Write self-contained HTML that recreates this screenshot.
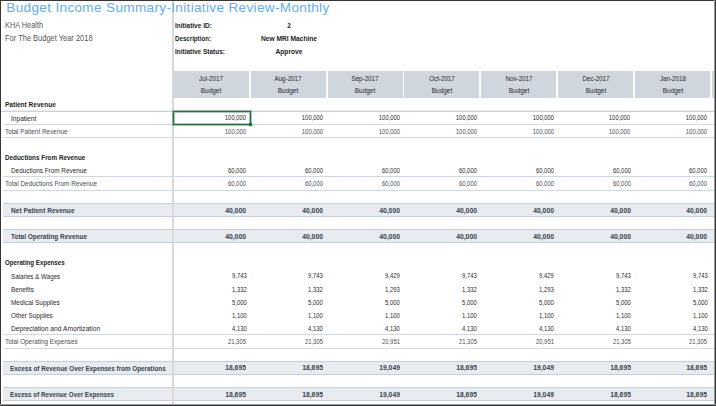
<!DOCTYPE html>
<html><head><meta charset="utf-8"><style>
html,body{margin:0;padding:0;background:#fff;width:716px;height:406px;overflow:hidden;}
body{position:relative;font-family:"Liberation Sans",sans-serif;}
.t{position:absolute;white-space:pre;}
.r{position:absolute;box-sizing:content-box;}
</style></head><body>
<div class="r" style="left:174px;top:71px;width:75px;height:27px;background:#cfd6de;"></div>
<div class="r" style="left:251px;top:71px;width:75px;height:27px;background:#cfd6de;"></div>
<div class="r" style="left:328px;top:71px;width:75px;height:27px;background:#cfd6de;"></div>
<div class="r" style="left:404px;top:71px;width:75px;height:27px;background:#cfd6de;"></div>
<div class="r" style="left:481px;top:71px;width:75px;height:27px;background:#cfd6de;"></div>
<div class="r" style="left:558px;top:71px;width:75px;height:27px;background:#cfd6de;"></div>
<div class="r" style="left:635px;top:71px;width:75px;height:27px;background:#cfd6de;"></div>
<div class="r" style="left:712px;top:71px;width:75px;height:27px;background:#cfd6de;"></div>
<div class="t" style="left:11.20px;width:400px;text-align:center;top:75.07px;font-size:7.0px;line-height:7.0px;color:#2a2a2a;font-weight:400;letter-spacing:0px;transform:scaleX(0.89);transform-origin:center top;">Jul-2017</div>
<div class="t" style="left:11.20px;width:400px;text-align:center;top:87.17px;font-size:7.0px;line-height:7.0px;color:#2a2a2a;font-weight:400;letter-spacing:0px;transform:scaleX(0.92);transform-origin:center top;">Budget</div>
<div class="t" style="left:88.10px;width:400px;text-align:center;top:75.07px;font-size:7.0px;line-height:7.0px;color:#2a2a2a;font-weight:400;letter-spacing:0px;transform:scaleX(0.89);transform-origin:center top;">Aug-2017</div>
<div class="t" style="left:88.10px;width:400px;text-align:center;top:87.17px;font-size:7.0px;line-height:7.0px;color:#2a2a2a;font-weight:400;letter-spacing:0px;transform:scaleX(0.92);transform-origin:center top;">Budget</div>
<div class="t" style="left:165.00px;width:400px;text-align:center;top:75.07px;font-size:7.0px;line-height:7.0px;color:#2a2a2a;font-weight:400;letter-spacing:0px;transform:scaleX(0.89);transform-origin:center top;">Sep-2017</div>
<div class="t" style="left:165.00px;width:400px;text-align:center;top:87.17px;font-size:7.0px;line-height:7.0px;color:#2a2a2a;font-weight:400;letter-spacing:0px;transform:scaleX(0.92);transform-origin:center top;">Budget</div>
<div class="t" style="left:241.90px;width:400px;text-align:center;top:75.07px;font-size:7.0px;line-height:7.0px;color:#2a2a2a;font-weight:400;letter-spacing:0px;transform:scaleX(0.89);transform-origin:center top;">Oct-2017</div>
<div class="t" style="left:241.90px;width:400px;text-align:center;top:87.17px;font-size:7.0px;line-height:7.0px;color:#2a2a2a;font-weight:400;letter-spacing:0px;transform:scaleX(0.92);transform-origin:center top;">Budget</div>
<div class="t" style="left:318.80px;width:400px;text-align:center;top:75.07px;font-size:7.0px;line-height:7.0px;color:#2a2a2a;font-weight:400;letter-spacing:0px;transform:scaleX(0.89);transform-origin:center top;">Nov-2017</div>
<div class="t" style="left:318.80px;width:400px;text-align:center;top:87.17px;font-size:7.0px;line-height:7.0px;color:#2a2a2a;font-weight:400;letter-spacing:0px;transform:scaleX(0.92);transform-origin:center top;">Budget</div>
<div class="t" style="left:395.70px;width:400px;text-align:center;top:75.07px;font-size:7.0px;line-height:7.0px;color:#2a2a2a;font-weight:400;letter-spacing:0px;transform:scaleX(0.89);transform-origin:center top;">Dec-2017</div>
<div class="t" style="left:395.70px;width:400px;text-align:center;top:87.17px;font-size:7.0px;line-height:7.0px;color:#2a2a2a;font-weight:400;letter-spacing:0px;transform:scaleX(0.92);transform-origin:center top;">Budget</div>
<div class="t" style="left:472.60px;width:400px;text-align:center;top:75.07px;font-size:7.0px;line-height:7.0px;color:#2a2a2a;font-weight:400;letter-spacing:0px;transform:scaleX(0.89);transform-origin:center top;">Jan-2018</div>
<div class="t" style="left:472.60px;width:400px;text-align:center;top:87.17px;font-size:7.0px;line-height:7.0px;color:#2a2a2a;font-weight:400;letter-spacing:0px;transform:scaleX(0.92);transform-origin:center top;">Budget</div>
<div class="t" style="left:549.50px;width:400px;text-align:center;top:75.07px;font-size:7.0px;line-height:7.0px;color:#2a2a2a;font-weight:400;letter-spacing:0px;transform:scaleX(0.89);transform-origin:center top;">Feb-2018</div>
<div class="t" style="left:549.50px;width:400px;text-align:center;top:87.17px;font-size:7.0px;line-height:7.0px;color:#2a2a2a;font-weight:400;letter-spacing:0px;transform:scaleX(0.92);transform-origin:center top;">Budget</div>
<div class="r" style="left:1px;top:110px;width:714px;height:1px;background:#ececec;"></div>
<div class="r" style="left:1px;top:111px;width:714px;height:1px;background:#d2d2d2;"></div>
<div class="r" style="left:3px;top:124px;width:712px;height:1px;background:#cdd8e2;"></div>
<div class="r" style="left:3px;top:124px;width:712px;height:1px;background:#cdd8e2;"></div>
<div class="r" style="left:3px;top:137px;width:712px;height:1px;background:#cdd8e2;"></div>
<div class="r" style="left:3px;top:176px;width:712px;height:1px;background:#cdd8e2;"></div>
<div class="r" style="left:3px;top:190px;width:712px;height:1px;background:#cdd8e2;"></div>
<div class="r" style="left:3px;top:203px;width:712px;height:13px;background:#e8ebef;"></div>
<div class="r" style="left:3px;top:203px;width:712px;height:1px;background:#c3cfdb;"></div>
<div class="r" style="left:3px;top:216px;width:712px;height:1px;background:#c3cfdb;"></div>
<div class="r" style="left:3px;top:229px;width:712px;height:13px;background:#e8ebef;"></div>
<div class="r" style="left:3px;top:229px;width:712px;height:1px;background:#c3cfdb;"></div>
<div class="r" style="left:3px;top:242px;width:712px;height:1px;background:#c3cfdb;"></div>
<div class="r" style="left:3px;top:334px;width:712px;height:1px;background:#cdd8e2;"></div>
<div class="r" style="left:3px;top:348px;width:712px;height:1px;background:#cdd8e2;"></div>
<div class="r" style="left:3px;top:361px;width:712px;height:13px;background:#e8ebef;"></div>
<div class="r" style="left:3px;top:361px;width:712px;height:1px;background:#c3cfdb;"></div>
<div class="r" style="left:3px;top:374px;width:712px;height:1px;background:#c3cfdb;"></div>
<div class="r" style="left:3px;top:387px;width:712px;height:13px;background:#e8ebef;"></div>
<div class="r" style="left:3px;top:387px;width:712px;height:1px;background:#c3cfdb;"></div>
<div class="r" style="left:3px;top:400px;width:712px;height:1px;background:#c3cfdb;"></div>
<div class="r" style="left:172px;top:1px;width:1px;height:404px;background:#d8d8d8;"></div>
<div class="r" style="left:173px;top:1px;width:1px;height:404px;background:#d8d8d8;"></div>
<div class="t" style="left:4.50px;top:101.46px;font-size:7.3px;line-height:7.3px;color:#1e1e1e;font-weight:700;letter-spacing:0px;transform:scaleX(0.8947368421052633);transform-origin:left top;">Patient Revenue</div>
<div class="t" style="left:10.50px;top:114.62px;font-size:7.3px;line-height:7.3px;color:#2a2a2a;font-weight:400;letter-spacing:0px;transform:scaleX(0.9007562995357341);transform-origin:left top;">Inpatient</div>
<div class="t" style="right:469.70px;top:114.45px;font-size:7.5px;line-height:7.5px;color:#2a2a2a;font-weight:400;letter-spacing:0px;transform:scaleX(0.785);transform-origin:right top;">100,000</div>
<div class="t" style="right:392.87px;top:114.45px;font-size:7.5px;line-height:7.5px;color:#2a2a2a;font-weight:400;letter-spacing:0px;transform:scaleX(0.785);transform-origin:right top;">100,000</div>
<div class="t" style="right:316.04px;top:114.45px;font-size:7.5px;line-height:7.5px;color:#2a2a2a;font-weight:400;letter-spacing:0px;transform:scaleX(0.785);transform-origin:right top;">100,000</div>
<div class="t" style="right:239.21px;top:114.45px;font-size:7.5px;line-height:7.5px;color:#2a2a2a;font-weight:400;letter-spacing:0px;transform:scaleX(0.785);transform-origin:right top;">100,000</div>
<div class="t" style="right:162.38px;top:114.45px;font-size:7.5px;line-height:7.5px;color:#2a2a2a;font-weight:400;letter-spacing:0px;transform:scaleX(0.785);transform-origin:right top;">100,000</div>
<div class="t" style="right:85.55px;top:114.45px;font-size:7.5px;line-height:7.5px;color:#2a2a2a;font-weight:400;letter-spacing:0px;transform:scaleX(0.785);transform-origin:right top;">100,000</div>
<div class="t" style="right:8.72px;top:114.45px;font-size:7.5px;line-height:7.5px;color:#2a2a2a;font-weight:400;letter-spacing:0px;transform:scaleX(0.785);transform-origin:right top;">100,000</div>
<div class="t" style="right:-68.11px;top:114.45px;font-size:7.5px;line-height:7.5px;color:#2a2a2a;font-weight:400;letter-spacing:0px;transform:scaleX(0.785);transform-origin:right top;">100,000</div>
<div class="t" style="left:4.90px;top:127.78px;font-size:7.3px;line-height:7.3px;color:#46515c;font-weight:400;letter-spacing:0px;transform:scaleX(0.8761793410098618);transform-origin:left top;">Total Patient Revenue</div>
<div class="t" style="right:469.70px;top:127.61px;font-size:7.5px;line-height:7.5px;color:#46515c;font-weight:400;letter-spacing:0px;transform:scaleX(0.785);transform-origin:right top;">100,000</div>
<div class="t" style="right:392.87px;top:127.61px;font-size:7.5px;line-height:7.5px;color:#46515c;font-weight:400;letter-spacing:0px;transform:scaleX(0.785);transform-origin:right top;">100,000</div>
<div class="t" style="right:316.04px;top:127.61px;font-size:7.5px;line-height:7.5px;color:#46515c;font-weight:400;letter-spacing:0px;transform:scaleX(0.785);transform-origin:right top;">100,000</div>
<div class="t" style="right:239.21px;top:127.61px;font-size:7.5px;line-height:7.5px;color:#46515c;font-weight:400;letter-spacing:0px;transform:scaleX(0.785);transform-origin:right top;">100,000</div>
<div class="t" style="right:162.38px;top:127.61px;font-size:7.5px;line-height:7.5px;color:#46515c;font-weight:400;letter-spacing:0px;transform:scaleX(0.785);transform-origin:right top;">100,000</div>
<div class="t" style="right:85.55px;top:127.61px;font-size:7.5px;line-height:7.5px;color:#46515c;font-weight:400;letter-spacing:0px;transform:scaleX(0.785);transform-origin:right top;">100,000</div>
<div class="t" style="right:8.72px;top:127.61px;font-size:7.5px;line-height:7.5px;color:#46515c;font-weight:400;letter-spacing:0px;transform:scaleX(0.785);transform-origin:right top;">100,000</div>
<div class="t" style="right:-68.11px;top:127.61px;font-size:7.5px;line-height:7.5px;color:#46515c;font-weight:400;letter-spacing:0px;transform:scaleX(0.785);transform-origin:right top;">100,000</div>
<div class="t" style="left:4.60px;top:154.10px;font-size:7.3px;line-height:7.3px;color:#1e1e1e;font-weight:700;letter-spacing:0px;transform:scaleX(0.8688707027346403);transform-origin:left top;">Deductions From Revenue</div>
<div class="t" style="left:10.50px;top:167.26px;font-size:7.3px;line-height:7.3px;color:#2a2a2a;font-weight:400;letter-spacing:0px;transform:scaleX(0.8745993487197763);transform-origin:left top;">Deductions From Revenue</div>
<div class="t" style="right:469.70px;top:167.09px;font-size:7.5px;line-height:7.5px;color:#2a2a2a;font-weight:400;letter-spacing:0px;transform:scaleX(0.785);transform-origin:right top;">60,000</div>
<div class="t" style="right:392.87px;top:167.09px;font-size:7.5px;line-height:7.5px;color:#2a2a2a;font-weight:400;letter-spacing:0px;transform:scaleX(0.785);transform-origin:right top;">60,000</div>
<div class="t" style="right:316.04px;top:167.09px;font-size:7.5px;line-height:7.5px;color:#2a2a2a;font-weight:400;letter-spacing:0px;transform:scaleX(0.785);transform-origin:right top;">60,000</div>
<div class="t" style="right:239.21px;top:167.09px;font-size:7.5px;line-height:7.5px;color:#2a2a2a;font-weight:400;letter-spacing:0px;transform:scaleX(0.785);transform-origin:right top;">60,000</div>
<div class="t" style="right:162.38px;top:167.09px;font-size:7.5px;line-height:7.5px;color:#2a2a2a;font-weight:400;letter-spacing:0px;transform:scaleX(0.785);transform-origin:right top;">60,000</div>
<div class="t" style="right:85.55px;top:167.09px;font-size:7.5px;line-height:7.5px;color:#2a2a2a;font-weight:400;letter-spacing:0px;transform:scaleX(0.785);transform-origin:right top;">60,000</div>
<div class="t" style="right:8.72px;top:167.09px;font-size:7.5px;line-height:7.5px;color:#2a2a2a;font-weight:400;letter-spacing:0px;transform:scaleX(0.785);transform-origin:right top;">60,000</div>
<div class="t" style="right:-68.11px;top:167.09px;font-size:7.5px;line-height:7.5px;color:#2a2a2a;font-weight:400;letter-spacing:0px;transform:scaleX(0.785);transform-origin:right top;">60,000</div>
<div class="t" style="left:5.00px;top:180.42px;font-size:7.3px;line-height:7.3px;color:#46515c;font-weight:400;letter-spacing:0px;transform:scaleX(0.8827343896558155);transform-origin:left top;">Total Deductions From Revenue</div>
<div class="t" style="right:469.70px;top:180.25px;font-size:7.5px;line-height:7.5px;color:#46515c;font-weight:400;letter-spacing:0px;transform:scaleX(0.785);transform-origin:right top;">60,000</div>
<div class="t" style="right:392.87px;top:180.25px;font-size:7.5px;line-height:7.5px;color:#46515c;font-weight:400;letter-spacing:0px;transform:scaleX(0.785);transform-origin:right top;">60,000</div>
<div class="t" style="right:316.04px;top:180.25px;font-size:7.5px;line-height:7.5px;color:#46515c;font-weight:400;letter-spacing:0px;transform:scaleX(0.785);transform-origin:right top;">60,000</div>
<div class="t" style="right:239.21px;top:180.25px;font-size:7.5px;line-height:7.5px;color:#46515c;font-weight:400;letter-spacing:0px;transform:scaleX(0.785);transform-origin:right top;">60,000</div>
<div class="t" style="right:162.38px;top:180.25px;font-size:7.5px;line-height:7.5px;color:#46515c;font-weight:400;letter-spacing:0px;transform:scaleX(0.785);transform-origin:right top;">60,000</div>
<div class="t" style="right:85.55px;top:180.25px;font-size:7.5px;line-height:7.5px;color:#46515c;font-weight:400;letter-spacing:0px;transform:scaleX(0.785);transform-origin:right top;">60,000</div>
<div class="t" style="right:8.72px;top:180.25px;font-size:7.5px;line-height:7.5px;color:#46515c;font-weight:400;letter-spacing:0px;transform:scaleX(0.785);transform-origin:right top;">60,000</div>
<div class="t" style="right:-68.11px;top:180.25px;font-size:7.5px;line-height:7.5px;color:#46515c;font-weight:400;letter-spacing:0px;transform:scaleX(0.785);transform-origin:right top;">60,000</div>
<div class="t" style="left:10.50px;top:206.74px;font-size:7.3px;line-height:7.3px;color:#37434f;font-weight:700;letter-spacing:0px;transform:scaleX(0.9004396141099438);transform-origin:left top;">Net Patient Revenue</div>
<div class="t" style="right:469.70px;top:206.57px;font-size:7.5px;line-height:7.5px;color:#37434f;font-weight:700;letter-spacing:0px;transform:scaleX(0.905);transform-origin:right top;">40,000</div>
<div class="t" style="right:392.87px;top:206.57px;font-size:7.5px;line-height:7.5px;color:#37434f;font-weight:700;letter-spacing:0px;transform:scaleX(0.905);transform-origin:right top;">40,000</div>
<div class="t" style="right:316.04px;top:206.57px;font-size:7.5px;line-height:7.5px;color:#37434f;font-weight:700;letter-spacing:0px;transform:scaleX(0.905);transform-origin:right top;">40,000</div>
<div class="t" style="right:239.21px;top:206.57px;font-size:7.5px;line-height:7.5px;color:#37434f;font-weight:700;letter-spacing:0px;transform:scaleX(0.905);transform-origin:right top;">40,000</div>
<div class="t" style="right:162.38px;top:206.57px;font-size:7.5px;line-height:7.5px;color:#37434f;font-weight:700;letter-spacing:0px;transform:scaleX(0.905);transform-origin:right top;">40,000</div>
<div class="t" style="right:85.55px;top:206.57px;font-size:7.5px;line-height:7.5px;color:#37434f;font-weight:700;letter-spacing:0px;transform:scaleX(0.905);transform-origin:right top;">40,000</div>
<div class="t" style="right:8.72px;top:206.57px;font-size:7.5px;line-height:7.5px;color:#37434f;font-weight:700;letter-spacing:0px;transform:scaleX(0.905);transform-origin:right top;">40,000</div>
<div class="t" style="right:-68.11px;top:206.57px;font-size:7.5px;line-height:7.5px;color:#37434f;font-weight:700;letter-spacing:0px;transform:scaleX(0.905);transform-origin:right top;">40,000</div>
<div class="t" style="left:10.80px;top:233.06px;font-size:7.3px;line-height:7.3px;color:#37434f;font-weight:700;letter-spacing:0px;transform:scaleX(0.886107234887143);transform-origin:left top;">Total Operating Revenue</div>
<div class="t" style="right:469.70px;top:232.89px;font-size:7.5px;line-height:7.5px;color:#37434f;font-weight:700;letter-spacing:0px;transform:scaleX(0.905);transform-origin:right top;">40,000</div>
<div class="t" style="right:392.87px;top:232.89px;font-size:7.5px;line-height:7.5px;color:#37434f;font-weight:700;letter-spacing:0px;transform:scaleX(0.905);transform-origin:right top;">40,000</div>
<div class="t" style="right:316.04px;top:232.89px;font-size:7.5px;line-height:7.5px;color:#37434f;font-weight:700;letter-spacing:0px;transform:scaleX(0.905);transform-origin:right top;">40,000</div>
<div class="t" style="right:239.21px;top:232.89px;font-size:7.5px;line-height:7.5px;color:#37434f;font-weight:700;letter-spacing:0px;transform:scaleX(0.905);transform-origin:right top;">40,000</div>
<div class="t" style="right:162.38px;top:232.89px;font-size:7.5px;line-height:7.5px;color:#37434f;font-weight:700;letter-spacing:0px;transform:scaleX(0.905);transform-origin:right top;">40,000</div>
<div class="t" style="right:85.55px;top:232.89px;font-size:7.5px;line-height:7.5px;color:#37434f;font-weight:700;letter-spacing:0px;transform:scaleX(0.905);transform-origin:right top;">40,000</div>
<div class="t" style="right:8.72px;top:232.89px;font-size:7.5px;line-height:7.5px;color:#37434f;font-weight:700;letter-spacing:0px;transform:scaleX(0.905);transform-origin:right top;">40,000</div>
<div class="t" style="right:-68.11px;top:232.89px;font-size:7.5px;line-height:7.5px;color:#37434f;font-weight:700;letter-spacing:0px;transform:scaleX(0.905);transform-origin:right top;">40,000</div>
<div class="t" style="left:4.60px;top:259.38px;font-size:7.3px;line-height:7.3px;color:#1e1e1e;font-weight:700;letter-spacing:0px;transform:scaleX(0.8450704225352113);transform-origin:left top;">Operating Expenses</div>
<div class="t" style="left:10.50px;top:272.54px;font-size:7.3px;line-height:7.3px;color:#2a2a2a;font-weight:400;letter-spacing:0px;transform:scaleX(0.8528247048380757);transform-origin:left top;">Salaries &amp; Wages</div>
<div class="t" style="right:469.70px;top:272.37px;font-size:7.5px;line-height:7.5px;color:#2a2a2a;font-weight:400;letter-spacing:0px;transform:scaleX(0.785);transform-origin:right top;">9,743</div>
<div class="t" style="right:392.87px;top:272.37px;font-size:7.5px;line-height:7.5px;color:#2a2a2a;font-weight:400;letter-spacing:0px;transform:scaleX(0.785);transform-origin:right top;">9,743</div>
<div class="t" style="right:316.04px;top:272.37px;font-size:7.5px;line-height:7.5px;color:#2a2a2a;font-weight:400;letter-spacing:0px;transform:scaleX(0.785);transform-origin:right top;">9,429</div>
<div class="t" style="right:239.21px;top:272.37px;font-size:7.5px;line-height:7.5px;color:#2a2a2a;font-weight:400;letter-spacing:0px;transform:scaleX(0.785);transform-origin:right top;">9,743</div>
<div class="t" style="right:162.38px;top:272.37px;font-size:7.5px;line-height:7.5px;color:#2a2a2a;font-weight:400;letter-spacing:0px;transform:scaleX(0.785);transform-origin:right top;">9,429</div>
<div class="t" style="right:85.55px;top:272.37px;font-size:7.5px;line-height:7.5px;color:#2a2a2a;font-weight:400;letter-spacing:0px;transform:scaleX(0.785);transform-origin:right top;">9,743</div>
<div class="t" style="right:8.72px;top:272.37px;font-size:7.5px;line-height:7.5px;color:#2a2a2a;font-weight:400;letter-spacing:0px;transform:scaleX(0.785);transform-origin:right top;">9,743</div>
<div class="t" style="right:-68.11px;top:272.37px;font-size:7.5px;line-height:7.5px;color:#2a2a2a;font-weight:400;letter-spacing:0px;transform:scaleX(0.785);transform-origin:right top;">9,743</div>
<div class="t" style="left:10.50px;top:285.70px;font-size:7.3px;line-height:7.3px;color:#2a2a2a;font-weight:400;letter-spacing:0px;transform:scaleX(0.87025878733671);transform-origin:left top;">Benefits</div>
<div class="t" style="right:469.70px;top:285.53px;font-size:7.5px;line-height:7.5px;color:#2a2a2a;font-weight:400;letter-spacing:0px;transform:scaleX(0.785);transform-origin:right top;">1,332</div>
<div class="t" style="right:392.87px;top:285.53px;font-size:7.5px;line-height:7.5px;color:#2a2a2a;font-weight:400;letter-spacing:0px;transform:scaleX(0.785);transform-origin:right top;">1,332</div>
<div class="t" style="right:316.04px;top:285.53px;font-size:7.5px;line-height:7.5px;color:#2a2a2a;font-weight:400;letter-spacing:0px;transform:scaleX(0.785);transform-origin:right top;">1,293</div>
<div class="t" style="right:239.21px;top:285.53px;font-size:7.5px;line-height:7.5px;color:#2a2a2a;font-weight:400;letter-spacing:0px;transform:scaleX(0.785);transform-origin:right top;">1,332</div>
<div class="t" style="right:162.38px;top:285.53px;font-size:7.5px;line-height:7.5px;color:#2a2a2a;font-weight:400;letter-spacing:0px;transform:scaleX(0.785);transform-origin:right top;">1,293</div>
<div class="t" style="right:85.55px;top:285.53px;font-size:7.5px;line-height:7.5px;color:#2a2a2a;font-weight:400;letter-spacing:0px;transform:scaleX(0.785);transform-origin:right top;">1,332</div>
<div class="t" style="right:8.72px;top:285.53px;font-size:7.5px;line-height:7.5px;color:#2a2a2a;font-weight:400;letter-spacing:0px;transform:scaleX(0.785);transform-origin:right top;">1,332</div>
<div class="t" style="right:-68.11px;top:285.53px;font-size:7.5px;line-height:7.5px;color:#2a2a2a;font-weight:400;letter-spacing:0px;transform:scaleX(0.785);transform-origin:right top;">1,332</div>
<div class="t" style="left:10.50px;top:298.86px;font-size:7.3px;line-height:7.3px;color:#2a2a2a;font-weight:400;letter-spacing:0px;transform:scaleX(0.8838614884089345);transform-origin:left top;">Medical Supplies</div>
<div class="t" style="right:469.70px;top:298.69px;font-size:7.5px;line-height:7.5px;color:#2a2a2a;font-weight:400;letter-spacing:0px;transform:scaleX(0.785);transform-origin:right top;">5,000</div>
<div class="t" style="right:392.87px;top:298.69px;font-size:7.5px;line-height:7.5px;color:#2a2a2a;font-weight:400;letter-spacing:0px;transform:scaleX(0.785);transform-origin:right top;">5,000</div>
<div class="t" style="right:316.04px;top:298.69px;font-size:7.5px;line-height:7.5px;color:#2a2a2a;font-weight:400;letter-spacing:0px;transform:scaleX(0.785);transform-origin:right top;">5,000</div>
<div class="t" style="right:239.21px;top:298.69px;font-size:7.5px;line-height:7.5px;color:#2a2a2a;font-weight:400;letter-spacing:0px;transform:scaleX(0.785);transform-origin:right top;">5,000</div>
<div class="t" style="right:162.38px;top:298.69px;font-size:7.5px;line-height:7.5px;color:#2a2a2a;font-weight:400;letter-spacing:0px;transform:scaleX(0.785);transform-origin:right top;">5,000</div>
<div class="t" style="right:85.55px;top:298.69px;font-size:7.5px;line-height:7.5px;color:#2a2a2a;font-weight:400;letter-spacing:0px;transform:scaleX(0.785);transform-origin:right top;">5,000</div>
<div class="t" style="right:8.72px;top:298.69px;font-size:7.5px;line-height:7.5px;color:#2a2a2a;font-weight:400;letter-spacing:0px;transform:scaleX(0.785);transform-origin:right top;">5,000</div>
<div class="t" style="right:-68.11px;top:298.69px;font-size:7.5px;line-height:7.5px;color:#2a2a2a;font-weight:400;letter-spacing:0px;transform:scaleX(0.785);transform-origin:right top;">5,000</div>
<div class="t" style="left:10.50px;top:312.02px;font-size:7.3px;line-height:7.3px;color:#2a2a2a;font-weight:400;letter-spacing:0px;transform:scaleX(0.8614161476768811);transform-origin:left top;">Other Supplies</div>
<div class="t" style="right:469.70px;top:311.85px;font-size:7.5px;line-height:7.5px;color:#2a2a2a;font-weight:400;letter-spacing:0px;transform:scaleX(0.785);transform-origin:right top;">1,100</div>
<div class="t" style="right:392.87px;top:311.85px;font-size:7.5px;line-height:7.5px;color:#2a2a2a;font-weight:400;letter-spacing:0px;transform:scaleX(0.785);transform-origin:right top;">1,100</div>
<div class="t" style="right:316.04px;top:311.85px;font-size:7.5px;line-height:7.5px;color:#2a2a2a;font-weight:400;letter-spacing:0px;transform:scaleX(0.785);transform-origin:right top;">1,100</div>
<div class="t" style="right:239.21px;top:311.85px;font-size:7.5px;line-height:7.5px;color:#2a2a2a;font-weight:400;letter-spacing:0px;transform:scaleX(0.785);transform-origin:right top;">1,100</div>
<div class="t" style="right:162.38px;top:311.85px;font-size:7.5px;line-height:7.5px;color:#2a2a2a;font-weight:400;letter-spacing:0px;transform:scaleX(0.785);transform-origin:right top;">1,100</div>
<div class="t" style="right:85.55px;top:311.85px;font-size:7.5px;line-height:7.5px;color:#2a2a2a;font-weight:400;letter-spacing:0px;transform:scaleX(0.785);transform-origin:right top;">1,100</div>
<div class="t" style="right:8.72px;top:311.85px;font-size:7.5px;line-height:7.5px;color:#2a2a2a;font-weight:400;letter-spacing:0px;transform:scaleX(0.785);transform-origin:right top;">1,100</div>
<div class="t" style="right:-68.11px;top:311.85px;font-size:7.5px;line-height:7.5px;color:#2a2a2a;font-weight:400;letter-spacing:0px;transform:scaleX(0.785);transform-origin:right top;">1,100</div>
<div class="t" style="left:10.50px;top:325.18px;font-size:7.3px;line-height:7.3px;color:#2a2a2a;font-weight:400;letter-spacing:0px;transform:scaleX(0.9155105676282084);transform-origin:left top;">Depreciation and Amortization</div>
<div class="t" style="right:469.70px;top:325.01px;font-size:7.5px;line-height:7.5px;color:#2a2a2a;font-weight:400;letter-spacing:0px;transform:scaleX(0.785);transform-origin:right top;">4,130</div>
<div class="t" style="right:392.87px;top:325.01px;font-size:7.5px;line-height:7.5px;color:#2a2a2a;font-weight:400;letter-spacing:0px;transform:scaleX(0.785);transform-origin:right top;">4,130</div>
<div class="t" style="right:316.04px;top:325.01px;font-size:7.5px;line-height:7.5px;color:#2a2a2a;font-weight:400;letter-spacing:0px;transform:scaleX(0.785);transform-origin:right top;">4,130</div>
<div class="t" style="right:239.21px;top:325.01px;font-size:7.5px;line-height:7.5px;color:#2a2a2a;font-weight:400;letter-spacing:0px;transform:scaleX(0.785);transform-origin:right top;">4,130</div>
<div class="t" style="right:162.38px;top:325.01px;font-size:7.5px;line-height:7.5px;color:#2a2a2a;font-weight:400;letter-spacing:0px;transform:scaleX(0.785);transform-origin:right top;">4,130</div>
<div class="t" style="right:85.55px;top:325.01px;font-size:7.5px;line-height:7.5px;color:#2a2a2a;font-weight:400;letter-spacing:0px;transform:scaleX(0.785);transform-origin:right top;">4,130</div>
<div class="t" style="right:8.72px;top:325.01px;font-size:7.5px;line-height:7.5px;color:#2a2a2a;font-weight:400;letter-spacing:0px;transform:scaleX(0.785);transform-origin:right top;">4,130</div>
<div class="t" style="right:-68.11px;top:325.01px;font-size:7.5px;line-height:7.5px;color:#2a2a2a;font-weight:400;letter-spacing:0px;transform:scaleX(0.785);transform-origin:right top;">4,130</div>
<div class="t" style="left:5.00px;top:338.34px;font-size:7.3px;line-height:7.3px;color:#46515c;font-weight:400;letter-spacing:0px;transform:scaleX(0.8691716328826194);transform-origin:left top;">Total Operating Expenses</div>
<div class="t" style="right:469.70px;top:338.17px;font-size:7.5px;line-height:7.5px;color:#46515c;font-weight:400;letter-spacing:0px;transform:scaleX(0.785);transform-origin:right top;">21,305</div>
<div class="t" style="right:392.87px;top:338.17px;font-size:7.5px;line-height:7.5px;color:#46515c;font-weight:400;letter-spacing:0px;transform:scaleX(0.785);transform-origin:right top;">21,305</div>
<div class="t" style="right:316.04px;top:338.17px;font-size:7.5px;line-height:7.5px;color:#46515c;font-weight:400;letter-spacing:0px;transform:scaleX(0.785);transform-origin:right top;">20,951</div>
<div class="t" style="right:239.21px;top:338.17px;font-size:7.5px;line-height:7.5px;color:#46515c;font-weight:400;letter-spacing:0px;transform:scaleX(0.785);transform-origin:right top;">21,305</div>
<div class="t" style="right:162.38px;top:338.17px;font-size:7.5px;line-height:7.5px;color:#46515c;font-weight:400;letter-spacing:0px;transform:scaleX(0.785);transform-origin:right top;">20,951</div>
<div class="t" style="right:85.55px;top:338.17px;font-size:7.5px;line-height:7.5px;color:#46515c;font-weight:400;letter-spacing:0px;transform:scaleX(0.785);transform-origin:right top;">21,305</div>
<div class="t" style="right:8.72px;top:338.17px;font-size:7.5px;line-height:7.5px;color:#46515c;font-weight:400;letter-spacing:0px;transform:scaleX(0.785);transform-origin:right top;">21,305</div>
<div class="t" style="right:-68.11px;top:338.17px;font-size:7.5px;line-height:7.5px;color:#46515c;font-weight:400;letter-spacing:0px;transform:scaleX(0.785);transform-origin:right top;">21,305</div>
<div class="t" style="left:10.40px;top:364.66px;font-size:7.3px;line-height:7.3px;color:#37434f;font-weight:700;letter-spacing:0px;transform:scaleX(0.8644390653432587);transform-origin:left top;">Excess of Revenue Over Expenses from Operations</div>
<div class="t" style="right:469.70px;top:364.49px;font-size:7.5px;line-height:7.5px;color:#37434f;font-weight:700;letter-spacing:0px;transform:scaleX(0.905);transform-origin:right top;">18,695</div>
<div class="t" style="right:392.87px;top:364.49px;font-size:7.5px;line-height:7.5px;color:#37434f;font-weight:700;letter-spacing:0px;transform:scaleX(0.905);transform-origin:right top;">18,695</div>
<div class="t" style="right:316.04px;top:364.49px;font-size:7.5px;line-height:7.5px;color:#37434f;font-weight:700;letter-spacing:0px;transform:scaleX(0.905);transform-origin:right top;">19,049</div>
<div class="t" style="right:239.21px;top:364.49px;font-size:7.5px;line-height:7.5px;color:#37434f;font-weight:700;letter-spacing:0px;transform:scaleX(0.905);transform-origin:right top;">18,695</div>
<div class="t" style="right:162.38px;top:364.49px;font-size:7.5px;line-height:7.5px;color:#37434f;font-weight:700;letter-spacing:0px;transform:scaleX(0.905);transform-origin:right top;">19,049</div>
<div class="t" style="right:85.55px;top:364.49px;font-size:7.5px;line-height:7.5px;color:#37434f;font-weight:700;letter-spacing:0px;transform:scaleX(0.905);transform-origin:right top;">18,695</div>
<div class="t" style="right:8.72px;top:364.49px;font-size:7.5px;line-height:7.5px;color:#37434f;font-weight:700;letter-spacing:0px;transform:scaleX(0.905);transform-origin:right top;">18,695</div>
<div class="t" style="right:-68.11px;top:364.49px;font-size:7.5px;line-height:7.5px;color:#37434f;font-weight:700;letter-spacing:0px;transform:scaleX(0.905);transform-origin:right top;">18,695</div>
<div class="t" style="left:10.40px;top:390.98px;font-size:7.3px;line-height:7.3px;color:#37434f;font-weight:700;letter-spacing:0px;transform:scaleX(0.8578832114062175);transform-origin:left top;">Excess of Revenue Over Expenses</div>
<div class="t" style="right:469.70px;top:390.81px;font-size:7.5px;line-height:7.5px;color:#37434f;font-weight:700;letter-spacing:0px;transform:scaleX(0.905);transform-origin:right top;">18,695</div>
<div class="t" style="right:392.87px;top:390.81px;font-size:7.5px;line-height:7.5px;color:#37434f;font-weight:700;letter-spacing:0px;transform:scaleX(0.905);transform-origin:right top;">18,695</div>
<div class="t" style="right:316.04px;top:390.81px;font-size:7.5px;line-height:7.5px;color:#37434f;font-weight:700;letter-spacing:0px;transform:scaleX(0.905);transform-origin:right top;">19,049</div>
<div class="t" style="right:239.21px;top:390.81px;font-size:7.5px;line-height:7.5px;color:#37434f;font-weight:700;letter-spacing:0px;transform:scaleX(0.905);transform-origin:right top;">18,695</div>
<div class="t" style="right:162.38px;top:390.81px;font-size:7.5px;line-height:7.5px;color:#37434f;font-weight:700;letter-spacing:0px;transform:scaleX(0.905);transform-origin:right top;">19,049</div>
<div class="t" style="right:85.55px;top:390.81px;font-size:7.5px;line-height:7.5px;color:#37434f;font-weight:700;letter-spacing:0px;transform:scaleX(0.905);transform-origin:right top;">18,695</div>
<div class="t" style="right:8.72px;top:390.81px;font-size:7.5px;line-height:7.5px;color:#37434f;font-weight:700;letter-spacing:0px;transform:scaleX(0.905);transform-origin:right top;">18,695</div>
<div class="t" style="right:-68.11px;top:390.81px;font-size:7.5px;line-height:7.5px;color:#37434f;font-weight:700;letter-spacing:0px;transform:scaleX(0.905);transform-origin:right top;">18,695</div>
<div class="r" style="left:173px;top:111px;width:76px;height:12px;border:1px solid #2b6e46;box-shadow:0 0 0 1px rgba(60,130,88,0.45), inset 0 0 0 1px rgba(60,130,88,0.45);"></div>
<div class="r" style="left:248.5px;top:122.5px;width:3px;height:3px;background:#1f6a3f;border-radius:1.5px;box-shadow:0 0 0 0.6px rgba(31,106,63,0.6);"></div>
<div class="t" style="left:6.30px;top:1.29px;font-size:13.6px;line-height:13.6px;color:#66aef0;font-weight:400;letter-spacing:0.32px;">Budget Income Summary-Initiative Review-Monthly</div>
<div class="t" style="left:5.20px;top:21.12px;font-size:8.6px;line-height:8.6px;color:#585858;font-weight:400;letter-spacing:0px;transform:scaleX(0.856);transform-origin:left top;">KHA Health</div>
<div class="t" style="left:5.30px;top:34.12px;font-size:8.6px;line-height:8.6px;color:#585858;font-weight:400;letter-spacing:0px;transform:scaleX(0.87);transform-origin:left top;">For The Budget Year 2018</div>
<div class="t" style="left:174.80px;top:21.92px;font-size:7.3px;line-height:7.3px;color:#1e1e1e;font-weight:700;letter-spacing:0px;transform:scaleX(0.89);transform-origin:left top;">Initiative ID:</div>
<div class="t" style="left:174.80px;top:35.32px;font-size:7.3px;line-height:7.3px;color:#1e1e1e;font-weight:700;letter-spacing:0px;transform:scaleX(0.845);transform-origin:left top;">Description:</div>
<div class="t" style="left:174.80px;top:48.02px;font-size:7.3px;line-height:7.3px;color:#1e1e1e;font-weight:700;letter-spacing:0px;transform:scaleX(0.885);transform-origin:left top;">Initiative Status:</div>
<div class="t" style="left:88.50px;width:400px;text-align:center;top:21.92px;font-size:7.3px;line-height:7.3px;color:#1e1e1e;font-weight:700;letter-spacing:0px;transform:scaleX(0.9);transform-origin:center top;">2</div>
<div class="t" style="left:88.50px;width:400px;text-align:center;top:35.32px;font-size:7.3px;line-height:7.3px;color:#1e1e1e;font-weight:700;letter-spacing:0px;transform:scaleX(0.91);transform-origin:center top;">New MRI Machine</div>
<div class="t" style="left:88.50px;width:400px;text-align:center;top:48.02px;font-size:7.3px;line-height:7.3px;color:#1e1e1e;font-weight:700;letter-spacing:0px;transform:scaleX(0.91);transform-origin:center top;">Approve</div>
<div class="r" style="left:0px;top:0px;width:716px;height:1px;background:#363636;"></div>
<div class="r" style="left:0px;top:0px;width:1px;height:406px;background:#363636;"></div>
<div class="r" style="left:714px;top:0px;width:1px;height:406px;background:#9a9a9a;"></div>
<div class="r" style="left:715px;top:0px;width:1px;height:406px;background:#363636;"></div>
<div class="r" style="left:0px;top:404px;width:716px;height:1px;background:#9a9a9a;"></div>
<div class="r" style="left:0px;top:405px;width:716px;height:1px;background:#363636;"></div>
</body></html>
